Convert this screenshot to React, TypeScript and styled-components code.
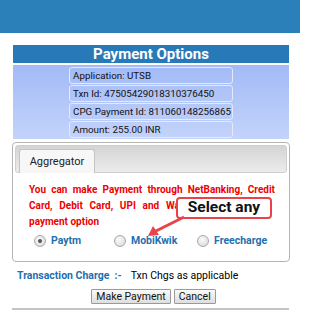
import React from 'react'
import styled, { createGlobalStyle } from 'styled-components'

const Global = createGlobalStyle`
  html, body {
    margin: 0;
    padding: 0;
    background: #fff;
    font-family: Roboto, "Liberation Sans", Arial, sans-serif;
  }
`

const Page = styled.div`
  width: 300px;
  height: 316px;
  overflow: hidden;
  background: #fff;
`

const TopBar = styled.div`
  height: 33px;
  background: #2b80ba;
`

const Sheet = styled.div`
  position: relative;
  padding: 12px 11px 0 13px;
`

const Title = styled.div`
  height: 18px;
  line-height: 18px;
  background: #2879b7;
  color: #fff;
  font-weight: 700;
  font-size: 15px;
  text-align: center;
  margin-bottom: 2px;
`

const InfoArea = styled.div`
  display: flex;
  flex-direction: column;
  align-items: center;
  gap: 1px;
  padding: 2px 0 1px;
  background: linear-gradient(#a2baf6, #c3d3fa);
`

const InfoRow = styled.div`
  width: 164px;
  height: 17px;
  box-sizing: border-box;
  border: 1px solid #e4eafb;
  border-radius: 3px;
  padding-left: 3px;
  font-family: Roboto, sans-serif;
  font-size: 9.8px;
  line-height: 15px;
  color: #111;
  white-space: nowrap;
`

const Tabs = styled.div`
  margin: 3px -1px 0 -1px;
  border: 1px solid #b5b5b5;
  border-radius: 4px;
  padding: 2px;
  height: 120px;
  box-sizing: border-box;
`

const TabBar = styled.div`
  height: 26px;
  border: 1px solid #cfcfcf;
  border-radius: 3px;
  background: linear-gradient(#d4d4d4, #ececec);
  display: flex;
  align-items: flex-end;
  padding-left: 3px;
`

const Tab = styled.div`
  width: 76px;
  height: 24px;
  box-sizing: border-box;
  margin-bottom: -1px;
  border: 1px solid #c4c4c4;
  border-bottom: none;
  border-radius: 3px 3px 0 0;
  background: #f7f7f7;
  font-size: 11px;
  color: #222;
  text-align: center;
  line-height: 24px;
`

const Notice = styled.div`
  padding: 9px 12px 0 14px;
  color: #ee0000;
  font-weight: 700;
  font-size: 10px;
  line-height: 16px;
`

const NoticeLine = styled.div<{ $full?: boolean; $trim?: number }>`
  text-align: ${(p) => (p.$full ? 'justify' : 'left')};
  text-align-last: ${(p) => (p.$full ? 'justify' : 'left')};
  margin-right: ${(p) => p.$trim ?? 0}px;
  white-space: nowrap;
`

const Choices = styled.div`
  display: grid;
  grid-template-columns: 80px 83px 80px;
  padding: 4px 0 0 19px;
`

const Choice = styled.label`
  display: flex;
  align-items: center;
  gap: 5px;
  font-size: 10.5px;
  font-weight: 700;
  color: #1f70b0;
`

const Radio = styled.span<{ $on?: boolean }>`
  width: 10px;
  height: 10px;
  border-radius: 50%;
  border: 1px solid #a8a8a8;
  background: radial-gradient(circle at 40% 35%, #fafafa, #d6d6d6);
  display: flex;
  align-items: center;
  justify-content: center;
  &::after {
    content: '';
    width: 4px;
    height: 4px;
    border-radius: 50%;
    background: #555;
    display: ${(p) => (p.$on ? 'block' : 'none')};
  }
`

const ChargeLine = styled.div`
  display: flex;
  gap: 9px;
  padding: 7px 0 0 4px;
  font-size: 10.5px;
  line-height: 14px;
`

const ChargeLabel = styled.span`
  font-weight: 700;
  color: #1f70b0;
`

const Buttons = styled.div`
  display: flex;
  justify-content: center;
  gap: 3px;
  padding: 6px 0 0 5px;
`

const Button = styled.button`
  height: 15px;
  padding: 0 4px;
  font-family: inherit;
  font-size: 10.5px;
  line-height: 13px;
  color: #111;
  border: 1px solid #9a9a9a;
  border-radius: 1px;
  background: linear-gradient(#fafafa, #dedede);
`

const Rule = styled.div`
  margin: 4px 0 0 -1px;
  height: 2px;
  background: #c4c4c4;
`

const Callout = styled.div`
  position: absolute;
  left: 176px;
  top: 164px;
  width: 96px;
  height: 22px;
  box-sizing: border-box;
  border: 2.5px solid #e8434a;
  border-radius: 4px;
  background: #fff;
  color: #111;
  font-weight: 700;
  font-size: 15.5px;
  line-height: 17px;
  text-align: center;
`

const Arrow = styled.svg`
  position: absolute;
  left: 140px;
  top: 180px;
`

export default function App() {
  return (
    <Page>
      <Global />
      <TopBar />
      <Sheet>
        <Title>Payment Options</Title>
        <InfoArea>
          <InfoRow>Application: UTSB</InfoRow>
          <InfoRow>Txn Id: 47505429018310376450</InfoRow>
          <InfoRow>CPG Payment Id: 811060148256865</InfoRow>
          <InfoRow>Amount: 255.00 INR</InfoRow>
        </InfoArea>
        <Tabs>
          <TabBar>
            <Tab>Aggregator</Tab>
          </TabBar>
          <Notice>
            <NoticeLine $full>You can make Payment through NetBanking, Credit</NoticeLine>
            <NoticeLine $full $trim={8}>Card, Debit Card, UPI and Wallet using the list</NoticeLine>
            <NoticeLine>payment option</NoticeLine>
          </Notice>
          <Choices>
            <Choice><Radio $on />Paytm</Choice>
            <Choice><Radio />MobiKwik</Choice>
            <Choice><Radio />Freecharge</Choice>
          </Choices>
        </Tabs>
        <ChargeLine>
          <ChargeLabel>Transaction Charge&nbsp;&nbsp;:-</ChargeLabel>
          <span>Txn Chgs as applicable</span>
        </ChargeLine>
        <Buttons>
          <Button>Make Payment</Button>
          <Button>Cancel</Button>
        </Buttons>
        <Rule />
        <Callout>Select any</Callout>
        <Arrow width="50" height="30" viewBox="0 0 50 30">
          <line x1="44" y1="4" x2="14" y2="19" stroke="#e8434a" strokeWidth="3" />
          <polygon points="8,23 13,13 19,22" fill="#e8434a" />
        </Arrow>
      </Sheet>
    </Page>
  )
}
